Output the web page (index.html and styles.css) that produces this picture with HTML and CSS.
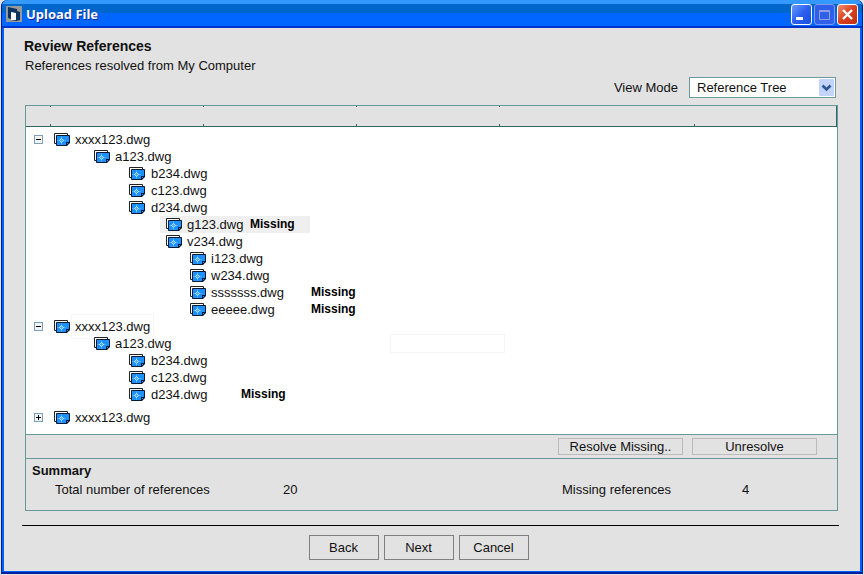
FILE: index.html
```html
<!DOCTYPE html>
<html lang="en">
<head>
    <meta charset="UTF-8">
    <meta name="viewport" content="width=device-width, initial-scale=1.0">
    <title>Upload File</title>
    <link rel="stylesheet" href="styles.css">
</head>
<body>
<svg class="sprite" aria-hidden="true">
    <symbol id="dwg" viewBox="0 0 16 14">
        <path d="M2.5 10.5H0.5V0.5H13.5V3" fill="#fff" stroke="#222"/>
        <path d="M2.5 2.5H15.5V9.5L12.5 12.5H2.5Z" fill="#1e90ff" stroke="#061a33"/>
        <path d="M3 7.5H12M7.5 3V12" stroke="#49adff"/>
        <path d="M7 5H8V6H7ZM6 6H7V7H6ZM8 6H9V7H8ZM5 7H6V8H5ZM9 7H10V8H9ZM6 8H7V9H6ZM8 8H9V9H8ZM7 9H8V10H7Z" fill="#b5e4ff"/>
        <path d="M12 13V9H16V10L13 13Z" fill="#061a33"/>
        <path d="M13 10H14V11H13Z" fill="#1e90ff"/>
    </symbol>
</svg>

<div class="window">
    <header class="title-bar">
        <svg class="app-icon" width="16" height="16" viewBox="0 0 16 16">
            <rect width="16" height="16" fill="#999"/>
            <path d="M2 1L11 3V5L14 6V14L10 15L5 14V13L2 12Z" fill="#0e335c"/>
            <path d="M5 6L10 7V14H5Z" fill="#fff"/>
        </svg>
        <h1>Upload File</h1>
        <div class="window-buttons">
            <button type="button" class="win-btn" aria-label="Minimize">
                <svg width="19" height="19" viewBox="0 0 19 19"><path d="M4 12H11V15H4Z" fill="#fff"/></svg>
            </button>
            <button type="button" class="win-btn win-max" aria-label="Maximize" disabled>
                <svg width="19" height="19" viewBox="0 0 19 19"><path d="M4.5 5.5H14.5V14.5H4.5ZM4 6.5H15" fill="none" stroke="#8f9fe8"/></svg>
            </button>
            <button type="button" class="win-btn win-close" aria-label="Close">
                <svg width="19" height="19" viewBox="0 0 19 19"><path d="M5 5L14 14M14 5L5 14" stroke="#fff" stroke-width="2.4"/></svg>
            </button>
        </div>
    </header>

    <main class="content">
        <h2>Review References</h2>
        <p class="subtitle">References resolved from My Computer</p>

        <div class="view-mode">
            <label for="viewMode">View Mode</label>
            <div class="select-box">
                <select id="viewMode">
                    <option>Reference Tree</option>
                </select>
                <svg class="arrow" width="15" height="17" viewBox="0 0 15 17">
                    <rect width="15" height="17" rx="1" fill="#c3d3fb"/>
                    <path d="M3.5 6.5L7.5 10.5L11.5 6.5" fill="none" stroke="#2b5590" stroke-width="2.6"/>
                </svg>
            </div>
        </div>

        <section class="panel">
            <div class="columns">
                <span></span><span></span><span></span><span></span><span></span><span></span>
            </div>

            <div class="tree">
                <ul class="level-1">
                    <li>
                        <div class="row"><button type="button" class="toggle" aria-label="Collapse"><svg width="9" height="9"><path d="M2 4.5H7" stroke="#000"/></svg></button><svg class="file"><use href="#dwg"/></svg><span class="name">xxxx123.dwg</span></div>
                        <ul class="level-2">
                            <li>
                                <div class="row"><svg class="file"><use href="#dwg"/></svg><span class="name">a123.dwg</span></div>
                                <ul class="level-3">
                                    <li><div class="row"><svg class="file"><use href="#dwg"/></svg><span class="name">b234.dwg</span></div></li>
                                    <li><div class="row"><svg class="file"><use href="#dwg"/></svg><span class="name">c123.dwg</span></div></li>
                                    <li>
                                        <div class="row"><svg class="file"><use href="#dwg"/></svg><span class="name">d234.dwg</span></div>
                                        <ul class="level-4">
                                            <li><div class="row selected"><svg class="file"><use href="#dwg"/></svg><span class="name">g123.dwg</span><strong>Missing</strong></div></li>
                                            <li>
                                                <div class="row"><svg class="file"><use href="#dwg"/></svg><span class="name">v234.dwg</span></div>
                                                <ul class="level-5">
                                                    <li><div class="row"><svg class="file"><use href="#dwg"/></svg><span class="name">i123.dwg</span></div></li>
                                                    <li><div class="row"><svg class="file"><use href="#dwg"/></svg><span class="name">w234.dwg</span></div></li>
                                                    <li><div class="row"><svg class="file"><use href="#dwg"/></svg><span class="name">sssssss.dwg</span><strong>Missing</strong></div></li>
                                                    <li><div class="row"><svg class="file"><use href="#dwg"/></svg><span class="name">eeeee.dwg</span><strong>Missing</strong></div></li>
                                                </ul>
                                            </li>
                                        </ul>
                                    </li>
                                </ul>
                            </li>
                        </ul>
                    </li>
                    <li>
                        <div class="row"><button type="button" class="toggle" aria-label="Collapse"><svg width="9" height="9"><path d="M2 4.5H7" stroke="#000"/></svg></button><svg class="file"><use href="#dwg"/></svg><span class="name outlined">xxxx123.dwg</span></div>
                        <ul class="level-2">
                            <li>
                                <div class="row"><svg class="file"><use href="#dwg"/></svg><span class="name">a123.dwg</span><input type="text" class="note" aria-label="Note"></div>
                                <ul class="level-3">
                                    <li><div class="row"><svg class="file"><use href="#dwg"/></svg><span class="name">b234.dwg</span></div></li>
                                    <li><div class="row"><svg class="file"><use href="#dwg"/></svg><span class="name">c123.dwg</span></div></li>
                                    <li><div class="row"><svg class="file"><use href="#dwg"/></svg><span class="name">d234.dwg</span><strong>Missing</strong></div></li>
                                </ul>
                            </li>
                        </ul>
                    </li>
                    <li class="collapsed">
                        <div class="row"><button type="button" class="toggle" aria-label="Expand"><svg width="9" height="9"><path d="M2 4.5H7M4.5 2V7" stroke="#000"/></svg></button><svg class="file"><use href="#dwg"/></svg><span class="name">xxxx123.dwg</span></div>
                    </li>
                </ul>
            </div>

            <div class="actions">
                <button type="button">Resolve Missing..</button>
                <button type="button">Unresolve</button>
            </div>

            <div class="summary">
                <h3>Summary</h3>
                <dl>
                    <dt>Total number of references</dt>
                    <dd>20</dd>
                    <dt>Missing references</dt>
                    <dd>4</dd>
                </dl>
            </div>
        </section>

        <footer class="footer">
            <button type="button">Back</button>
            <button type="button">Next</button>
            <button type="button">Cancel</button>
        </footer>
    </main>
</div>
</body>
</html>
```

FILE: styles.css
```css
* {
    margin: 0;
    padding: 0;
    box-sizing: border-box;
}

body {
    min-height: 100vh;
    display: flex;
    padding: 0 1px 1px;
    background: #e2e2e2;
    font-family: "Liberation Sans", Arial, sans-serif;
    font-size: 13px;
    line-height: 17px;
    color: #111;
}

button,
select {
    font: inherit;
    color: inherit;
}

ul {
    list-style: none;
}

.sprite {
    display: none;
}

.window {
    flex: 1;
    display: flex;
    flex-direction: column;
    border: solid #0020a0;
    border-width: 0 1px 2px;
    border-radius: 6px 6px 0 0;
    background: #0060f8;
    padding: 0 2px 1px;
}

/* title bar */
.title-bar {
    display: flex;
    align-items: center;
    height: 28px;
    margin: 0 -2px;
    padding: 2px 4px 0;
    border-bottom: 2px solid #0033cc;
    border-radius: 6px 6px 0 0;
    background: linear-gradient(#3399ff 4px, #0066cc 4px, #0066cc 13px, #0066ff 13px);
}

.app-icon {
    margin-right: 4px;
}

.title-bar h1 {
    flex: 1;
    font-family: "Noto Sans", sans-serif;
    font-size: 13px;
    color: #fff;
    text-shadow: 1px 1px 0 #0a2a90;
}

.window-buttons {
    display: flex;
    gap: 2px;
}

.win-btn {
    width: 21px;
    height: 21px;
    border: 1px solid #fff;
    border-radius: 3px;
    background: linear-gradient(135deg, #6a9cff, #2b5ff0 50%, #1c4fe0);
}

.win-btn svg {
    display: block;
}

.win-max {
    border-color: #8098f0;
    background: #3060e8;
}

.win-close {
    background: linear-gradient(135deg, #f09070, #d84020 50%, #c03010);
}

/* page */
.content {
    flex: 1;
    display: flex;
    flex-direction: column;
    padding: 10px 21px 0 18px;
    background: #e2e2e2;
}

.content h2 {
    padding-left: 2px;
    font-size: 14px;
}

.subtitle {
    padding: 2px 0 0 3px;
}

.view-mode {
    display: flex;
    justify-content: flex-end;
    align-items: center;
    gap: 11px;
    padding: 3px 3px 7px;
}

.select-box {
    display: grid;
    align-items: center;
    width: 147px;
}

.select-box > * {
    grid-area: 1 / 1;
}

.select-box select {
    height: 21px;
    padding: 0 20px 0 7px;
    border: 1px solid #6a9a9a;
    border-radius: 0;
    appearance: none;
    background: #fff;
}

.arrow {
    justify-self: end;
    margin-right: 2px;
    pointer-events: none;
}

/* reference panel */
.panel {
    margin: 0 1px 0 3px;
    border: 1px solid #669999;
}

.columns {
    display: grid;
    grid-template-columns: 25fr 153fr 153fr 143fr 195fr 142fr;
    height: 21px;
    border-bottom: 1px solid #336666;
}

/* short ticks at the top and bottom of each column edge */
.columns span {
    background:
        linear-gradient(#336666, #336666) right top / 1px 1px no-repeat,
        linear-gradient(#336666, #336666) right bottom / 1px 2px no-repeat;
}

.columns span:nth-child(5) {
    background: linear-gradient(#336666, #336666) right bottom / 1px 2px no-repeat;
}

.columns span:last-child {
    background: none;
    border-right: 1px solid #336666;
}

.tree {
    padding: 4px 8px 8px;
    background: #fff;
}

.row {
    display: flex;
    align-items: center;
    gap: 5px;
    width: max-content;
    height: 17px;
}

.level-2 {
    padding-left: 60px;
}

.level-3 {
    padding-left: 35px;
}

.level-4 {
    padding-left: 37px;
}

.level-5 {
    padding-left: 24px;
}

.toggle {
    width: 9px;
    height: 9px;
    margin-right: 6px;
    border: 1px solid #7b9ebd;
    background: #f4f4f0;
}

.toggle svg {
    display: block;
    margin: -1px;
}

.file {
    width: 16px;
    height: 14px;
}

.level-3 .row {
    gap: 6px;
}

.level-4 .row {
    gap: 5px;
}

.level-3 .name {
    min-width: 84px;
}

.level-4 .name {
    min-width: 58px;
}

.level-5 .name {
    min-width: 95px;
}

.outlined {
    outline: 1px solid #f6f6f6;
    outline-offset: 3px;
}

.note {
    width: 115px;
    height: 19px;
    margin-left: 214px;
    border: 1px solid #f6f6f6;
    background: none;
    font: inherit;
}

.row strong {
    font-size: 12px;
    color: #000;
}

.selected {
    margin-left: -6px;
    padding: 0 15px 0 6px;
    background: #efefef;
}

.collapsed {
    padding-top: 6px;
}

.actions {
    display: flex;
    justify-content: flex-end;
    gap: 9px;
    padding: 3px 20px;
    border: solid #669999;
    border-width: 1px 0;
}

.actions button {
    width: 125px;
    height: 17px;
    border: 1px solid #bbb;
    background: none;
    line-height: 15px;
}

.summary {
    padding: 3px 6px 12px;
}

.summary h3 {
    font-size: 13px;
}

.summary dl {
    display: grid;
    grid-template-columns: 228fr 279fr 180fr 89fr;
    padding: 2px 0 0 23px;
}

/* footer */
.footer {
    display: flex;
    justify-content: center;
    gap: 5px;
    margin-top: 14px;
    padding: 9px 24px 0 0;
    border-top: 1px solid #000;
}

.footer button {
    width: 70px;
    height: 25px;
    border: 1px solid #808080;
    background: none;
}
```
